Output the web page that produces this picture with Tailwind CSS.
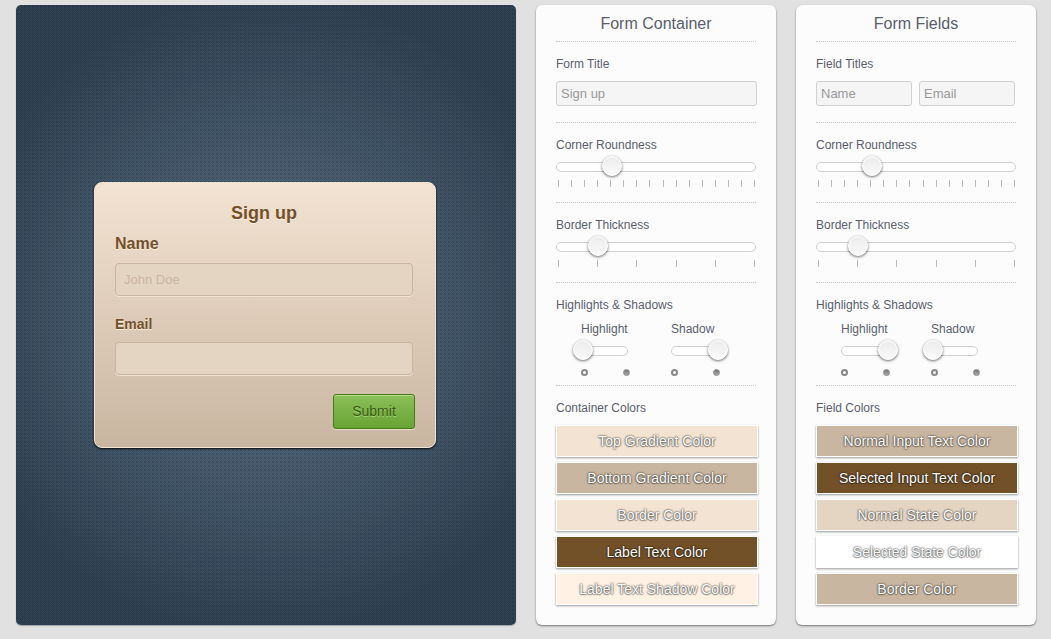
<!DOCTYPE html>
<html lang="en">
<head>
<meta charset="utf-8">
<meta name="viewport" content="width=device-width, initial-scale=1">
<title>Form Designer</title>
<script src="https://cdn.jsdelivr.net/npm/@tailwindcss/browser@4"></script>
<style>
  .weave {
    background-image:
      conic-gradient(rgba(130,165,185,.09) 25%, rgba(15,30,45,.09) 0 50%, rgba(130,165,185,.09) 0 75%, rgba(15,30,45,.09) 0),
      conic-gradient(transparent 75%, rgba(15,30,45,.16) 0),
      radial-gradient(circle 320px at center, #5f7386, #2b3d4d);
    background-size: 2px 2px, 4px 4px, auto;
  }
  .knob { appearance: none; background: transparent; }
  .knob::-webkit-slider-thumb {
    appearance: none; width: 20px; height: 20px; border-radius: 50%;
    border: 1px solid #fff;
    background: linear-gradient(#ebebeb, #fafafa) padding-box, #fff;
    box-shadow: 0 1px 3px rgba(0,0,0,.6);
  }
  .tint { text-shadow: 0 0 2px rgba(0,0,0,.7), 0 0 2px rgba(0,0,0,.5), 0 1px 1px rgba(0,0,0,.2); }
</style>
</head>
<body class="min-h-screen bg-[#e1e1e1] font-['Liberation_Sans',Arial,sans-serif] text-[#5a5e6c]">
<main class="flex items-stretch gap-5 pt-[5px] pr-[15px] pb-3.5 pl-4">

  <!-- Live preview -->
  <section class="weave flex min-w-96 flex-1 items-center justify-center rounded-[5px] pr-0.5 shadow-[0_1px_1px_rgba(0,0,0,0.3)]">
    <form class="flex w-[342px] flex-col rounded-lg border border-[#f3e3d2] bg-linear-to-b from-[#f3e3d2] to-[#c9b6a1] pt-5 pr-[22px] pb-[18px] pl-5 font-bold text-[#72502a] shadow-[0_1px_2px_rgba(0,0,0,0.9)] [text-shadow:0_1px_0_#fff1e3]">
      <h1 class="text-center text-lg leading-5">Sign up</h1>
      <label for="name" class="mt-3 text-base leading-[18px]">Name</label>
      <input id="name" type="text" placeholder="John Doe" class="mt-2.5 h-[33px] rounded border border-[#c9b6a1] bg-[#e4d5c2] px-2 text-[13px] font-normal text-[#72502a] shadow-[0_1px_0_rgba(255,241,227,0.6)] [text-shadow:none] placeholder:text-[#c9b6a1]">
      <label for="email" class="mt-5 text-sm leading-4">Email</label>
      <input id="email" type="text" class="mt-2.5 h-[33px] rounded border border-[#c9b6a1] bg-[#e4d5c2] px-2 text-[13px] font-normal text-[#72502a] shadow-[0_1px_0_rgba(255,241,227,0.6)]">
      <button type="button" class="mt-[19px] -mr-0.5 h-[35px] w-[82px] self-end rounded-[3px] border border-[#467a18] bg-linear-to-b from-[#8bc058] to-[#68a334] pb-0.5 text-sm font-normal text-[#3a5a12] shadow-[inset_0_1px_0_#b4dc8c,0_1px_0_rgba(255,241,227,0.6)] [text-shadow:0_1px_0_#a5d375]">Submit</button>
    </form>
  </section>

  <!-- Form container settings -->
  <section class="w-60 shrink-0 rounded-md bg-[#fcfcfc] px-5 pb-5 text-xs leading-[14px] shadow-[0_1px_2px_rgba(0,0,0,0.5)]">
    <h2 class="border-b border-dotted border-[#c8c8c8] pt-0.5 text-center text-base leading-[34px]">Form Container</h2>
    <div class="flex flex-col border-b border-dotted border-[#c8c8c8] pt-[15px] pb-4">
      <label for="c-title">Form Title</label>
      <input id="c-title" type="text" value="Sign up" class="mt-2.5 -mr-px h-[25px] rounded-[3px] border border-[#d0d0d0] bg-[#f5f5f5] px-1 text-[13px] text-[#999]">
    </div>
    <div class="flex flex-col border-b border-dotted border-[#c8c8c8] pt-[15px] pb-[15px]">
      <label for="c-round">Corner Roundness</label>
      <div class="mt-2.5 grid h-2.5 grid-cols-1 grid-rows-1">
        <div class="col-start-1 row-start-1 rounded-full border border-[#d0d0d0] bg-white"></div>
        <input id="c-round" type="range" min="0" max="15" value="4" class="knob col-start-1 row-start-1 -mt-1.5 -mr-2.5 -ml-[7px] h-5">
      </div>
      <div class="ticks mt-2 flex h-[7px] justify-between pr-[1px] pl-0.5" data-count="16"></div>
    </div>
    <div class="flex flex-col border-b border-dotted border-[#c8c8c8] pt-[15px] pb-[15px]">
      <label for="c-thick">Border Thickness</label>
      <div class="mt-2.5 grid h-2.5 grid-cols-1 grid-rows-1">
        <div class="col-start-1 row-start-1 rounded-full border border-[#d0d0d0] bg-white"></div>
        <input id="c-thick" type="range" min="0" max="5" value="1" class="knob col-start-1 row-start-1 -mt-1.5 -mr-2.5 -ml-[7px] h-5">
      </div>
      <div class="ticks mt-2 flex h-[7px] justify-between pr-[1px] pl-0.5" data-count="6"></div>
    </div>
    <div class="border-b border-dotted border-[#c8c8c8] pt-[15px] pb-[9px]">
      <h3>Highlights &amp; Shadows</h3>
      <div class="mt-2.5 flex gap-[43px] pl-[25px]">
        <div class="w-[47px]">
          <label for="c-high" class="block whitespace-nowrap">Highlight</label>
          <div class="mt-2.5 grid h-2.5 grid-cols-1 grid-rows-1">
            <div class="col-start-1 row-start-1 rounded-full border border-[#d0d0d0] bg-white"></div>
            <input id="c-high" type="range" min="0" max="1" value="0" class="knob col-start-1 row-start-1 -mt-1.5 -mr-2.5 -ml-2 h-5 min-w-0">
          </div>
          <div class="mt-[13px] -mr-0.5 flex justify-between"><i class="size-[7px] rounded-full border-2 border-[#888] bg-white"></i><i class="size-[7px] rounded-full border border-[#888] bg-linear-to-b from-[#777] to-[#aaa]"></i></div>
        </div>
        <div class="w-[47px]">
          <label for="c-shad" class="block whitespace-nowrap">Shadow</label>
          <div class="mt-2.5 grid h-2.5 grid-cols-1 grid-rows-1">
            <div class="col-start-1 row-start-1 rounded-full border border-[#d0d0d0] bg-white"></div>
            <input id="c-shad" type="range" min="0" max="1" value="1" class="knob col-start-1 row-start-1 -mt-1.5 -mr-2.5 -ml-2 h-5 min-w-0">
          </div>
          <div class="mt-[13px] -mr-0.5 flex justify-between"><i class="size-[7px] rounded-full border-2 border-[#888] bg-white"></i><i class="size-[7px] rounded-full border border-[#888] bg-linear-to-b from-[#777] to-[#aaa]"></i></div>
        </div>
      </div>
    </div>
    <div class="pt-[15px]">
      <h3>Container Colors</h3>
      <div class="mt-2.5 -mr-0.5 flex flex-col gap-[5px] text-sm text-white">
        <button type="button" class="tint h-8 border border-white bg-[#f3e3d2] shadow-[0_1px_2px_rgba(0,0,0,0.4)]">Top Gradient Color</button>
        <button type="button" class="tint h-8 border border-white bg-[#c9b6a1] shadow-[0_1px_2px_rgba(0,0,0,0.4)]">Bottom Gradient Color</button>
        <button type="button" class="tint h-8 border border-white bg-[#f3e3d2] shadow-[0_1px_2px_rgba(0,0,0,0.4)]">Border Color</button>
        <button type="button" class="tint h-8 border border-white bg-[#725028] shadow-[0_1px_2px_rgba(0,0,0,0.4)]">Label Text Color</button>
        <button type="button" class="tint h-8 border border-white bg-[#fff1e3] shadow-[0_1px_2px_rgba(0,0,0,0.4)]">Label Text Shadow Color</button>
      </div>
    </div>
  </section>

  <!-- Form field settings -->
  <section class="w-60 shrink-0 rounded-md bg-[#fcfcfc] px-5 pb-5 text-xs leading-[14px] shadow-[0_1px_2px_rgba(0,0,0,0.5)]">
    <h2 class="border-b border-dotted border-[#c8c8c8] pt-0.5 text-center text-base leading-[34px]">Form Fields</h2>
    <div class="border-b border-dotted border-[#c8c8c8] pt-[15px] pb-4">
      <h3>Field Titles</h3>
      <div class="mt-2.5 mr-px flex gap-[7px]">
        <input aria-label="First field title" type="text" value="Name" class="h-[25px] w-0 flex-1 rounded-[3px] border border-[#d0d0d0] bg-[#f5f5f5] px-1 text-[13px] text-[#999]">
        <input aria-label="Second field title" type="text" value="Email" class="h-[25px] w-0 flex-1 rounded-[3px] border border-[#d0d0d0] bg-[#f5f5f5] px-1 text-[13px] text-[#999]">
      </div>
    </div>
    <div class="flex flex-col border-b border-dotted border-[#c8c8c8] pt-[15px] pb-[15px]">
      <label for="f-round">Corner Roundness</label>
      <div class="mt-2.5 grid h-2.5 grid-cols-1 grid-rows-1">
        <div class="col-start-1 row-start-1 rounded-full border border-[#d0d0d0] bg-white"></div>
        <input id="f-round" type="range" min="0" max="15" value="4" class="knob col-start-1 row-start-1 -mt-1.5 -mr-2.5 -ml-[7px] h-5">
      </div>
      <div class="ticks mt-2 flex h-[7px] justify-between pr-[1px] pl-0.5" data-count="16"></div>
    </div>
    <div class="flex flex-col border-b border-dotted border-[#c8c8c8] pt-[15px] pb-[15px]">
      <label for="f-thick">Border Thickness</label>
      <div class="mt-2.5 grid h-2.5 grid-cols-1 grid-rows-1">
        <div class="col-start-1 row-start-1 rounded-full border border-[#d0d0d0] bg-white"></div>
        <input id="f-thick" type="range" min="0" max="5" value="1" class="knob col-start-1 row-start-1 -mt-1.5 -mr-2.5 -ml-[7px] h-5">
      </div>
      <div class="ticks mt-2 flex h-[7px] justify-between pr-[1px] pl-0.5" data-count="6"></div>
    </div>
    <div class="border-b border-dotted border-[#c8c8c8] pt-[15px] pb-[9px]">
      <h3>Highlights &amp; Shadows</h3>
      <div class="mt-2.5 flex gap-[43px] pl-[25px]">
        <div class="w-[47px]">
          <label for="f-high" class="block whitespace-nowrap">Highlight</label>
          <div class="mt-2.5 grid h-2.5 grid-cols-1 grid-rows-1">
            <div class="col-start-1 row-start-1 rounded-full border border-[#d0d0d0] bg-white"></div>
            <input id="f-high" type="range" min="0" max="1" value="1" class="knob col-start-1 row-start-1 -mt-1.5 -mr-2.5 -ml-2 h-5 min-w-0">
          </div>
          <div class="mt-[13px] -mr-0.5 flex justify-between"><i class="size-[7px] rounded-full border-2 border-[#888] bg-white"></i><i class="size-[7px] rounded-full border border-[#888] bg-linear-to-b from-[#777] to-[#aaa]"></i></div>
        </div>
        <div class="w-[47px]">
          <label for="f-shad" class="block whitespace-nowrap">Shadow</label>
          <div class="mt-2.5 grid h-2.5 grid-cols-1 grid-rows-1">
            <div class="col-start-1 row-start-1 rounded-full border border-[#d0d0d0] bg-white"></div>
            <input id="f-shad" type="range" min="0" max="1" value="0" class="knob col-start-1 row-start-1 -mt-1.5 -mr-2.5 -ml-2 h-5 min-w-0">
          </div>
          <div class="mt-[13px] -mr-0.5 flex justify-between"><i class="size-[7px] rounded-full border-2 border-[#888] bg-white"></i><i class="size-[7px] rounded-full border border-[#888] bg-linear-to-b from-[#777] to-[#aaa]"></i></div>
        </div>
      </div>
    </div>
    <div class="pt-[15px]">
      <h3>Field Colors</h3>
      <div class="mt-2.5 -mr-0.5 flex flex-col gap-[5px] text-sm text-white">
        <button type="button" class="tint h-8 border border-white bg-[#c9b6a1] shadow-[0_1px_2px_rgba(0,0,0,0.4)]">Normal Input Text Color</button>
        <button type="button" class="tint h-8 border border-white bg-[#725028] shadow-[0_1px_2px_rgba(0,0,0,0.4)]">Selected Input Text Color</button>
        <button type="button" class="tint h-8 border border-white bg-[#e4d5c2] shadow-[0_1px_2px_rgba(0,0,0,0.4)]">Normal State Color</button>
        <button type="button" class="tint h-8 border border-white bg-white shadow-[0_1px_2px_rgba(0,0,0,0.4)]">Selected State Color</button>
        <button type="button" class="tint h-8 border border-white bg-[#c9b6a1] shadow-[0_1px_2px_rgba(0,0,0,0.4)]">Border Color</button>
      </div>
    </div>
  </section>
</main>
<script>
  // Fill each slider scale with its tick marks
  document.querySelectorAll('.ticks').forEach(function (row) {
    for (let i = 0; i < Number(row.dataset.count); i++) {
      const tick = document.createElement('span');
      tick.className = 'w-px bg-[#bbb]';
      row.appendChild(tick);
    }
  });
</script>
</body>
</html>
